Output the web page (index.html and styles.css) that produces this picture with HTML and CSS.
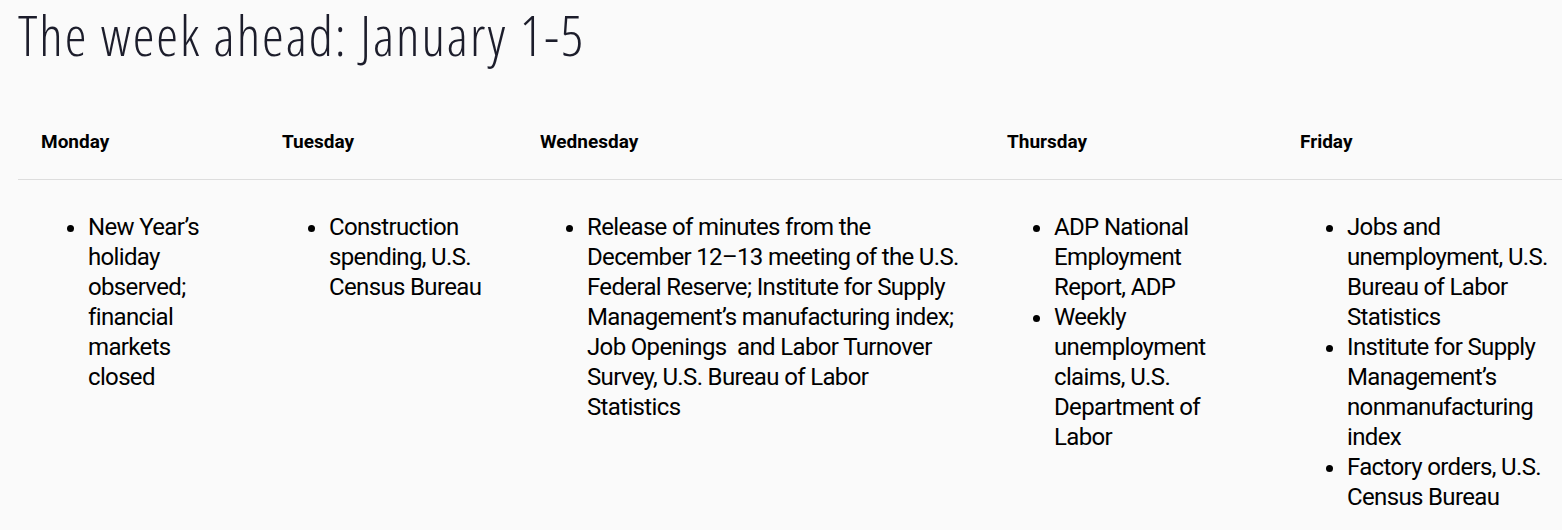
FILE: index.html
```html
<!DOCTYPE html>
<html lang="en">
<head>
<meta charset="utf-8">
<title>The week ahead</title>
<link rel="stylesheet" href="styles.css">
</head>
<body>
<h1 class="title">The week ahead: January 1-5</h1>
<div class="week">
  <div class="head">Monday</div>
  <div class="head">Tuesday</div>
  <div class="head">Wednesday</div>
  <div class="head">Thursday</div>
  <div class="head">Friday</div>
  <div class="cell"><ul><li>New Year’s holiday observed; financial markets closed</li></ul></div>
  <div class="cell"><ul><li>Construction spending, U.S. Census Bureau</li></ul></div>
  <div class="cell"><ul><li>Release of minutes from the December 12–13 meeting of the U.S. Federal Reserve; Institute for Supply Management’s manufacturing index; Job Openings&nbsp; and Labor Turnover Survey, U.S. Bureau of Labor Statistics</li></ul></div>
  <div class="cell"><ul><li>ADP National Employment Report, ADP</li><li>Weekly unemployment claims, U.S. Department of Labor</li></ul></div>
  <div class="cell cell-last"><ul><li>Jobs and unemployment, U.S. Bureau of Labor Statistics</li><li>Institute for Supply Management’s nonmanufacturing index</li><li>Factory orders, U.S. Census Bureau</li></ul></div>
</div>
</body>
</html>
```
FILE: styles.css
```css
html, body {
  margin: 0;
  padding: 0;
  background: #fafafa;
}
body {
  padding-left: 18px;
  font-family: "Roboto", "Liberation Sans", sans-serif;
}
.title {
  margin: 0;
  padding-top: 0;
  font-family: "Open Sans", "Liberation Sans Narrow", sans-serif;
  font-stretch: 75%;
  font-weight: 300;
  font-size: 55px;
  line-height: 70px;
  color: #1c1d2b;
  letter-spacing: 1.95px;
}
.week {
  margin-top: 62px;
  display: grid;
  grid-template-columns: 241px 258px 467px 293px 1fr;
}
.head {
  font-family: "Roboto", "DejaVu Sans", sans-serif;
  font-weight: 700;
  font-size: 19px;
  line-height: 20px;
  color: #000;
  padding: 0 23px 27px;
  border-bottom: 1px solid #dddddd;
}
.cell {
  padding: 32px 23px 0;
  font-family: "Roboto", "Liberation Sans", sans-serif;
  font-size: 24px;
  letter-spacing: -0.65px;
  line-height: 30px;
  color: #000;
}
.cell-last {
  padding-right: 0;
}
.cell ul {
  margin: 0;
  padding-left: 47px;
}
```
